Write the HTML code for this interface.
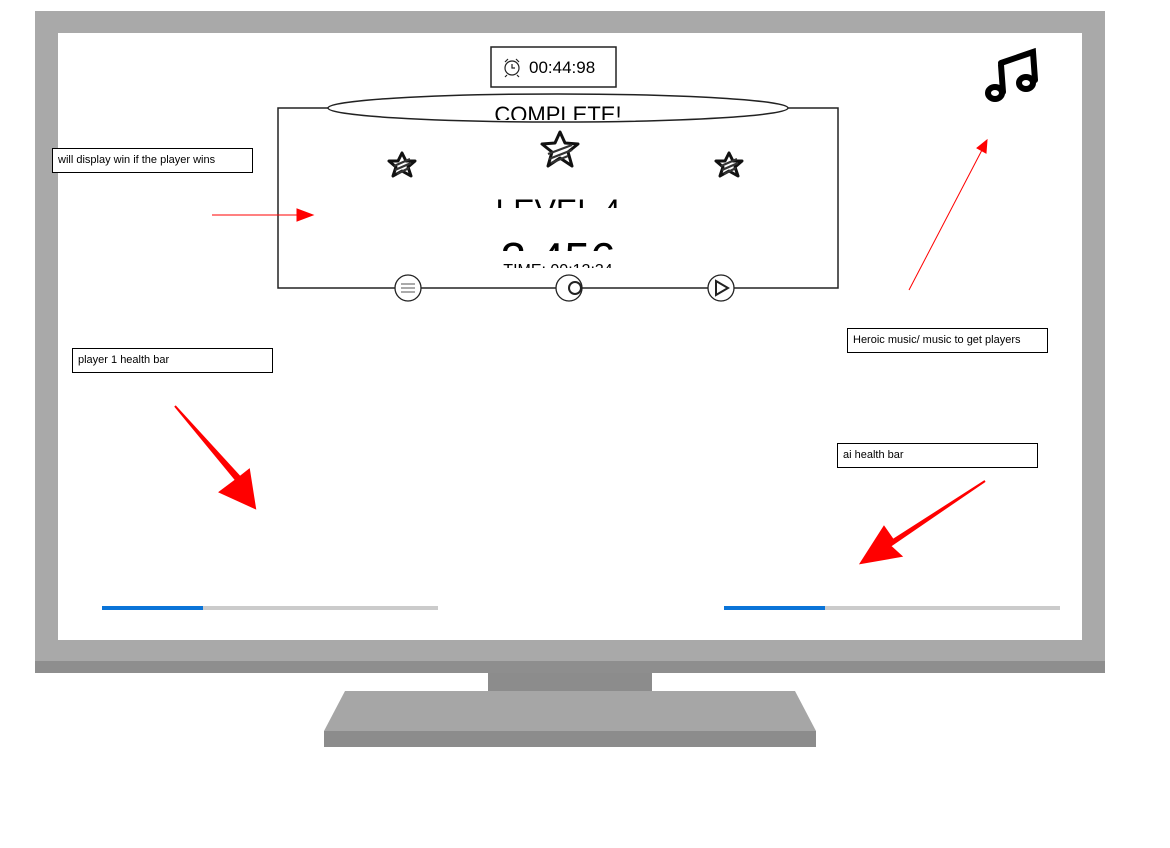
<!DOCTYPE html>
<html><head><style>
body{margin:0;width:1170px;height:848px;background:#fff;position:relative;overflow:hidden;font-family:"Liberation Sans",sans-serif}
.a{position:absolute}
.note{position:absolute;border:1px solid #000;background:#fff;font-size:11px;padding:0 5px;line-height:23px;height:25px;box-sizing:border-box;width:201px}
.clip{position:absolute;overflow:hidden;text-align:center;color:#000;white-space:nowrap}
</style></head><body>
<div class="a" style="left:35px;top:11px;width:1070px;height:650px;background:#a9a9a9"></div>
<div class="a" style="left:35px;top:661px;width:1070px;height:12px;background:#8e8e8e"></div>
<div class="a" style="left:58px;top:33px;width:1024px;height:607px;background:#fff"></div>
<div class="a" style="left:488px;top:673px;width:164px;height:36px;background:#8c8c8c"></div>
<svg class="a" style="left:0;top:0" width="1170" height="848">
<polygon points="345,691 795,691 816,731 324,731" fill="#a6a6a6"/>
<rect x="324" y="731" width="492" height="16" fill="#8c8c8c"/>
<rect x="278" y="108" width="560" height="180" fill="#fff" stroke="#222" stroke-width="1.5"/>
<ellipse cx="558" cy="108" rx="230" ry="14" fill="#fff" stroke="#222" stroke-width="1.5"/>
<rect x="491" y="47" width="125" height="40" fill="#fff" stroke="#222" stroke-width="1.5"/>
<circle cx="512" cy="68" r="7" fill="none" stroke="#222" stroke-width="1.2"/>
<path d="M512,64 V68 H515 M505,62 L508,59 M519,62 L516,59 M507,75 L505,77 M517,75 L519,77" stroke="#222" fill="none" stroke-width="1.2"/>
<g fill="#fff" stroke="#111" stroke-width="3" stroke-linejoin="round">
<path d="M402,153 L406,161 L415,161 L408,167 L411,176 L402,171 L393,176 L396,167 L389,161 L398,161Z"/>
<path d="M729,153 L733,161 L742,161 L735,167 L738,176 L729,171 L720,176 L723,167 L716,161 L725,161Z"/>
<path d="M560,132 L565,143 L578,144 L568,152 L572,166 L560,158 L548,166 L552,152 L542,144 L555,143Z"/>
</g>
<path d="M394,166 L410,159 M395,170 L411,163 M397,174 L409,168 M548,154 L572,145 M549,159 L572,150 M551,163 L568,156 M721,166 L737,159 M722,170 L738,163 M724,174 L736,168" stroke="#333" stroke-width="2.2"/>
<g fill="#fff" stroke="#222" stroke-width="1.3">
<circle cx="408" cy="288" r="13"/><circle cx="569" cy="288" r="13"/><circle cx="721" cy="288" r="13"/>
</g>
<path d="M401,284 H415 M401,288 H415 M401,292 H415" stroke="#aaa" stroke-width="2"/>
<circle cx="575" cy="288" r="6" fill="none" stroke="#222" stroke-width="2"/>
<path d="M716,281 L728,288 L716,295Z" fill="none" stroke="#222" stroke-width="2"/>
<g stroke="#000" stroke-width="6" fill="none" stroke-linecap="round">
<path d="M1001,65 L1003,92 M1001,63 L1033,52 L1035,80"/>
<ellipse cx="995" cy="93" rx="7" ry="6"/><ellipse cx="1026" cy="83" rx="7" ry="6"/>
</g>
<g stroke="red" fill="red">
<line x1="212" y1="215" x2="300" y2="215"/><polygon points="297,209 313,215 297,221"/>
<line x1="909" y1="290" x2="982" y2="150"/><polygon points="977,148 987,140 986,153"/>
<path d="M175,406 L236,480 L220,492 L255,508 L249,470 L240,477Z" stroke-width="2"/>
<path d="M985,481 L893,540 L884,527 L861,563 L901,556 L890,546Z" stroke-width="2"/>
</g>
<rect x="102" y="606" width="336" height="4" fill="#cbcbcb"/><rect x="102" y="606" width="101" height="4" fill="#0a74d8"/>
<rect x="724" y="606" width="336" height="4" fill="#cbcbcb"/><rect x="724" y="606" width="101" height="4" fill="#0a74d8"/>
</svg>
<div class="a" style="left:529px;top:58px;font-size:17px;font-weight:300">00:44:98</div>
<div class="clip" style="left:458px;top:100px;width:200px;height:20px;font-size:22px;line-height:30px">COMPLETE!</div>
<div class="clip" style="left:458px;top:188px;width:200px;height:20px;font-size:32px;line-height:46px">LEVEL 4</div>
<div class="clip" style="left:458px;top:225px;width:200px;height:26px;font-size:46px;line-height:68px">2,456</div>
<div class="clip" style="left:458px;top:258px;width:200px;height:10px;font-size:16px;line-height:26px">TIME: 00:12:34</div>
<div class="note" style="left:52px;top:148px">will display win if the player wins</div>
<div class="note" style="left:72px;top:348px">player 1 health bar</div>
<div class="note" style="left:847px;top:328px">Heroic music/ music to get players</div>
<div class="note" style="left:837px;top:443px">ai health bar</div>
</body></html>
